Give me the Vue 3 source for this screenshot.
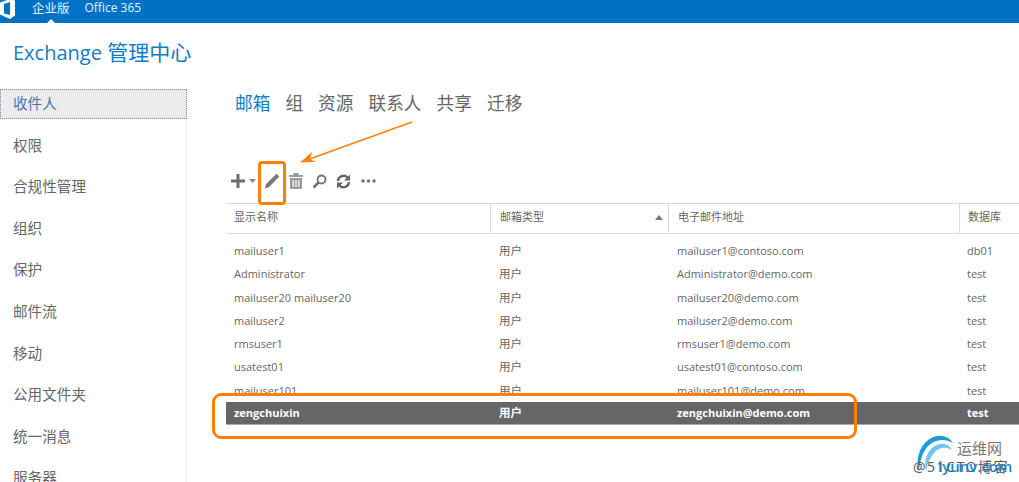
<script setup>
const navItems = ['收件人','权限','合规性管理','组织','保护','邮件流','移动','公用文件夹','统一消息','服务器']
const tabs = ['邮箱','组','资源','联系人','共享','迁移']
const rows = [
  ['mailuser1','用户','mailuser1@contoso.com','db01'],
  ['Administrator','用户','Administrator@demo.com','test'],
  ['mailuser20 mailuser20','用户','mailuser20@demo.com','test'],
  ['mailuser2','用户','mailuser2@demo.com','test'],
  ['rmsuser1','用户','rmsuser1@demo.com','test'],
  ['usatest01','用户','usatest01@contoso.com','test'],
  ['mailuser101','用户','mailuser101@demo.com','test'],
]
</script>

<template>
  <div class="page">
    <header class="topbar">
      <svg class="logo" width="16" height="20" viewBox="0 0 16 20">
        <path d="M0 3.500 L10 0 L15 1.500 V16.500 L10 20 L0 15.500 Z M10 3 L4 5 V14.500 L10 16 Z" fill="#fff" fill-rule="evenodd"/>
      </svg>
      <span class="top-link current">企业版</span>
      <span class="top-link">Office 365</span>
      <i class="caret"></i>
    </header>
    <h1 class="title"><span class="title-en">Exchange</span> 管理中心</h1>
    <div class="body">
      <nav class="side">
        <div v-for="(n,i) in navItems" :key="n" class="nav-item" :class="{active:i===0}">{{ n }}</div>
      </nav>
      <main class="main">
        <div class="tabs">
          <span v-for="(t,i) in tabs" :key="t" :class="{on:i===0}">{{ t }}</span>
        </div>
        <div class="tools">
          <svg width="16" height="16" viewBox="0 0 16 16"><path d="M6.500 1h3v5.500h5.500v3h-5.500v5.500h-3v-5.500h-5.500v-3h5.500z" fill="#6e6e6e"/></svg>
          <svg class="drop" width="7" height="4" viewBox="0 0 7 4"><path d="M0 0h7L3.500 4z" fill="#888"/></svg>
          <svg class="t-edit" width="16" height="16" viewBox="0 0 16 16"><path d="M12.500 0.800 L15.300 3.600 L5.200 14 L0.800 15.500 L2.100 11.100 Z" fill="#777"/></svg>
          <svg class="t-del" width="14" height="16" viewBox="0 0 14 16"><path d="M5 0h4l1 2h4v2H0V2h4zM1 5h12v11H1zM3.500 7v7h1.200V7zM6.400 7v7h1.200V7zM9.300 7v7h1.200V7z" fill="#999" fill-rule="evenodd"/></svg>
          <svg class="t-find" width="15" height="15" viewBox="0 0 15 15"><circle cx="9.500" cy="5.500" r="4" fill="none" stroke="#707070" stroke-width="1.800"/><path d="M6.500 8.500L1.500 13.500" stroke="#707070" stroke-width="2.600"/></svg>
          <svg class="t-ref" width="15" height="15" viewBox="0 0 15 15"><path d="M2 7a5.500 5.500 0 0 1 9.500-3.500M13 8a5.500 5.500 0 0 1-9.500 3.500" fill="none" stroke="#666" stroke-width="2.400"/><path d="M14 0.500v6h-6zM1 14.500v-6h6z" fill="#666"/></svg>
          <svg class="t-more" width="15" height="4" viewBox="0 0 15 4"><circle cx="2" cy="2" r="1.800" fill="#777"/><circle cx="7.500" cy="2" r="1.800" fill="#777"/><circle cx="13" cy="2" r="1.800" fill="#777"/></svg>
        </div>
        <div class="thead">
          <div class="c1">显示名称</div>
          <div class="c2">邮箱类型<i class="sort"></i></div>
          <div class="c3">电子邮件地址</div>
          <div class="c4">数据库</div>
        </div>
        <div class="tbody">
          <div v-for="r in rows" :key="r[0]" class="row">
            <div class="c1">{{ r[0] }}</div><div class="c2">{{ r[1] }}</div><div class="c3">{{ r[2] }}</div><div class="c4">{{ r[3] }}</div>
          </div>
          <div class="row selected">
            <div class="c1">zengchuixin</div><div class="c2">用户</div><div class="c3">zengchuixin@demo.com</div><div class="c4">test</div>
          </div>
        </div>
      </main>
    </div>

    <div class="mark-edit"></div>
    <div class="mark-row"></div>
    <svg class="arrow" width="120" height="50" viewBox="0 0 120 50">
      <path d="M113 1 L5 40" stroke="#f8860a" stroke-width="1.800" fill="none"/>
      <path d="M1 41.500 L13 31 L11 38 L17 41 Z" fill="#f8860a"/>
    </svg>
    <div class="wm">
      <svg class="wm-swirl" width="38" height="40" viewBox="0 0 38 40">
        <path d="M2 38 C-3 20 6 4 20 1 C27 0 33 3 36 8 C28 3 18 4 11 11 C5 18 2 28 2 38Z" fill="#1f9ad6"/>
        <path d="M9 36 C6 24 12 11 23 9 C28 8 33 11 35 15 C28 11 21 13 17 18 C12 24 10 30 9 36Z" fill="#6cc8ee"/>
      </svg>
      <span class="wm-cn">运维网</span>
      <span class="wm-51">@51CTO博客</span>
      <span class="wm-url">iyunv.com</span>
    </div>
  </div>
</template>

<style>
html, body { margin: 0; background: #fff; }
</style>

<style scoped>
.page { position: relative; width: 1019px; height: 482px; overflow: hidden; background: #fff; font-family: "Open Sans", "Noto Sans CJK SC", sans-serif; color: #666; }
.topbar { position: relative; height: 23px; background: #0072c6; display: flex; align-items: center; color: #fff; font-size: 12px; }
.logo { margin: -5px 0 0 0; flex: none; }
.top-link { margin-left: 16px; position: relative; top: -4px; color: #e6f1fa; }
.top-link.current { font-size: 12.500px; }
.top-link + .top-link { margin-left: 15px; }
.caret { position: absolute; left: 47px; bottom: 0; border: 4px solid transparent; border-bottom-color: #fff; border-top: 0; }
.title { margin: 0; padding: 16px 0 0 13px; height: 47px; box-sizing: content-box; font-size: 21px; line-height: 27px; font-weight: 400; color: #0f7cc8; white-space: nowrap; }
.title-en { font-size: 20px; }
.body { display: flex; margin-top: 3px; }
.side { width: 187px; flex: none; box-sizing: border-box; border-right: 1px solid #f0f0f0; height: 400px; }
.nav-item { height: 41.600px; line-height: 29px; padding-left: 13px; font-size: 14.600px; color: #666; box-sizing: border-box; }
.nav-item.active { height: 30px; margin: 0 -1px 11.600px 0; background: #eaebed; border: 1px dotted #888; padding-left: 12px; line-height: 27px; color: #4a79a5; }
.main { flex: 1; min-width: 0; padding-left: 39px; }
.tabs { display: flex; gap: 15px; font-size: 17.700px; line-height: 24px; color: #666; padding: 2px 0 0 9px; }
.tabs .on { color: #0f7cc8; }
.tools { display: flex; align-items: center; height: 28px; margin-top: 52px; padding-left: 4px; }
.drop { margin-left: 3px; }
.t-edit { margin-left: 8px; }
.t-del { margin-left: 9px; }
.t-find { margin-left: 9px; }
.t-ref { margin-left: 9px; }
.t-more { margin-left: 10px; }
.thead { display: flex; height: 31px; margin-top: 8px; border-top: 1px solid #d8d8d8; border-bottom: 1px solid #d8dbe3; box-sizing: border-box; line-height: 26px; font-size: 11px; color: #666; }
.c1 { width: 265px; flex: none; padding-left: 8px; box-sizing: border-box; }
.c2 { width: 178px; flex: none; padding-left: 8px; box-sizing: border-box; position: relative; }
.c3 { width: 290px; flex: none; padding-left: 8px; box-sizing: border-box; }
.c4 { flex: 1; padding-left: 8px; white-space: nowrap; }
.thead .c1 { width: 264px; }
.thead .c2 { width: 178px; }
.thead .c3 { width: 291px; padding-left: 9px; }
.thead .c2, .thead .c3, .thead .c4 { border-left: 1px solid #d8dbe3; }
.thead .c2 { padding-left: 9px; }
.sort { position: absolute; right: 5px; top: 11px; border: 4px solid transparent; border-top: 0; border-bottom: 5px solid #777; }
.tbody { padding-top: 5px; }
.row { display: flex; height: 23.300px; line-height: 23px; font-size: 11px; color: #666; white-space: nowrap; }
.row .c2 { font-size: 11.500px; }
.row.selected { height: 22px; line-height: 22px; background: #666; color: #fff; font-weight: 700; border-bottom: 1px solid #aaa; box-sizing: content-box; }
.mark-edit { position: absolute; left: 258px; top: 161px; width: 28px; height: 44px; box-sizing: border-box; border: 3px solid #ff8000; border-radius: 4px; }
.mark-row { position: absolute; left: 212px; top: 393px; width: 645px; height: 46px; box-sizing: border-box; border: 3px solid #ff8000; border-radius: 9px; }
.arrow { position: absolute; left: 299px; top: 121px; }
.wm { position: absolute; left: 900px; top: 430px; width: 119px; height: 52px; }
.wm-swirl { position: absolute; left: 17px; top: 5px; }
.wm-cn { position: absolute; left: 57px; top: 8px; font-size: 15px; line-height: 20px; color: #777; }
.wm-51 { position: absolute; left: 13px; top: 28px; font-size: 14px; line-height: 18px; letter-spacing: 1.500px; color: #555; white-space: nowrap; }
.wm-url { position: absolute; left: 38px; top: 26px; font-size: 15px; line-height: 20px; color: #1b86c9; font-weight: 600; white-space: nowrap; }
</style>
